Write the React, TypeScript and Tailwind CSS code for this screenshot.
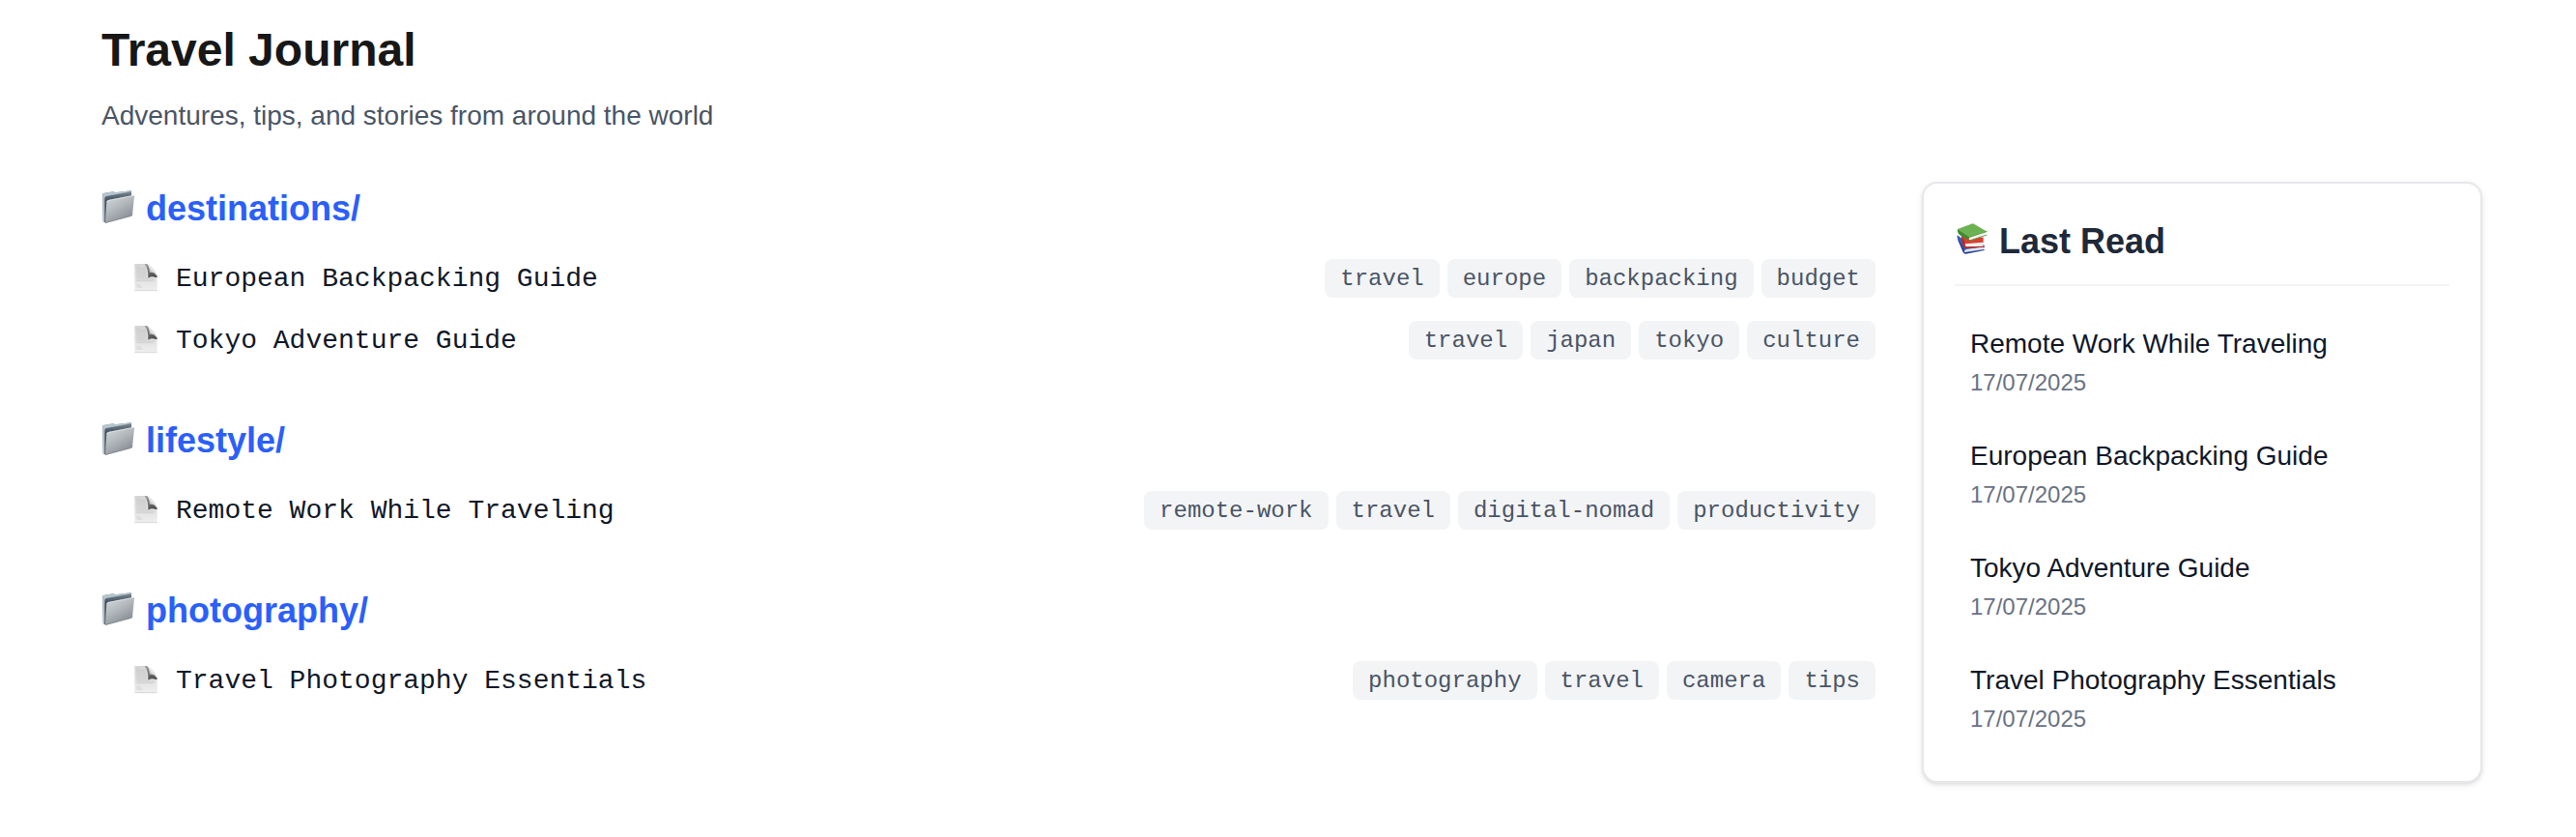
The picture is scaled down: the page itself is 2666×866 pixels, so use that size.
const FolderIcon = () => (
  <svg viewBox="45 48 108 108" className="h-9 w-9 shrink-0">
    <defs>
      <linearGradient id="folderFront" x1="0" y1="0" x2="0.6" y2="1">
        <stop offset="0" stopColor="#d9dcde" />
        <stop offset="0.5" stopColor="#b3b8bc" />
        <stop offset="1" stopColor="#858c92" />
      </linearGradient>
      <linearGradient id="folderBack" x1="0" y1="0" x2="0" y2="1">
        <stop offset="0" stopColor="#7d8b96" />
        <stop offset="0.3" stopColor="#43525e" />
        <stop offset="1" stopColor="#66737d" />
      </linearGradient>
    </defs>
    <path d="M49 62 Q49 60 51 60 L81 55 Q84 55 87 58 L136 52 Q138 52 138 54 V72 L60 152 L52 149 Q50 148 50 145Z" fill="url(#folderBack)" />
    <path d="M49 62 Q49 60 51 60 L81 55 Q84 55 87 58 L136 52 Q138 52 138 55 L60 69 Q55 70 55 75 L54 149 L52 148 Q50 147 50 145Z" fill="#b5c4cd" />
    <path d="M61 88 Q61 82 67 81 L143 66 Q148 65 147 70 L141 126 Q141 130 137 131 L60 152 Q57 153 57 149Z" fill="url(#folderFront)" />
    <path d="M62 88 Q62 83 67 82 L146 67" stroke="#eceef0" strokeWidth="2" fill="none" />
    <path d="M58 151 L137 130 Q141 129 141 125" stroke="#7b8389" strokeWidth="2" fill="none" />
  </svg>
);

const FileIcon = () => (
  <svg viewBox="141 276 84 84" className="h-7 w-7 shrink-0 overflow-visible">
    <defs>
      <linearGradient id="filePage" x1="0" y1="0" x2="0" y2="1">
        <stop offset="0" stopColor="#d6d6d6" />
        <stop offset="0.5" stopColor="#e0e0e0" />
        <stop offset="1" stopColor="#efefef" />
      </linearGradient>
      <linearGradient id="fileFold" x1="0.2" y1="0" x2="0.6" y2="1">
        <stop offset="0" stopColor="#9a9a9a" />
        <stop offset="0.5" stopColor="#6e6e6e" />
        <stop offset="1" stopColor="#4c4c4c" />
      </linearGradient>
      <linearGradient id="fileCurl" x1="1" y1="0" x2="0.3" y2="1">
        <stop offset="0" stopColor="#f4f4f4" />
        <stop offset="0.6" stopColor="#e2e2e2" />
        <stop offset="1" stopColor="#8e8e8e" />
      </linearGradient>
    </defs>
    <path d="M148 279 H184 L218 318 V363 H148Z" fill="url(#filePage)" />
    <path d="M148 362 H218" stroke="#cdcdcd" strokeWidth="2" />
    <path d="M154 287 H164 M154 292 H182 M154 297 H183 M154 302 H184 M154 307 H184 M154 312 H185 M154 317 H185 M154 322 H186 M154 327 H210 M154 332 H206 M154 345 H166 M154 351 H172" stroke="#bfbfbf" strokeWidth="1.6" />
    <path d="M179 279 Q186 278 190 282 L218 317 Q219 323 211 320 Q200 317 190 323 Q192 296 179 279Z" fill="url(#fileFold)" />
    <path d="M189 281 Q195 292 194 306 Q208 303 217 315 Q213 300 204 292 Q197 283 189 281Z" fill="url(#fileCurl)" />
  </svg>
);

const BooksIcon = () => (
  <svg viewBox="39 42 108 108" className="h-9 w-9 shrink-0">
    <path d="M46 88 Q46 85 49 86 L68 100 L131 116 V124 L72 132 L66 136Z" fill="#3c5bb4" />
    <path d="M73 129 L129 121 Q126 126 129 131 L76 140 Q70 135 73 129Z" fill="#dfe4f0" />
    <path d="M46 89 L66 126 Q68 131 70 138 L131 129 V132 L74 143 Q68 144 65 138 L49 101Z" fill="#27418f" />
    <path d="M60 83 L128 92 V108 L76 114 L64 112Z" fill="#d9402f" />
    <path d="M72 112 L127 107 Q124 113 128 120 L74 122 Q68 117 72 112Z" fill="#f1eeee" />
    <path d="M59 84 L71 106 Q67 115 75 121 L130 119 V122 L74 126 Q66 125 64 116Z" fill="#b52a1f" />
    <path d="M48 66 L91 50 Q95 48 99 50 L140 74 L84 93Z" fill="#6cb253" />
    <path d="M48 66 L84 91 Q79 98 85 104 L54 84 Q46 77 48 66Z" fill="#3f8a30" />
    <path d="M84 92 L135 75 Q131 80 134 86 L87 101 Q81 98 84 92Z" fill="#f3f5ee" />
    <path d="M84 102 L139 84" stroke="#4a9139" strokeWidth="2.5" />
    <path d="M83 91.5 L139 74" stroke="#4a9139" strokeWidth="2" />
  </svg>
);

const sections = [
  {
    name: "destinations/",
    posts: [
      { title: "European Backpacking Guide", tags: ["travel", "europe", "backpacking", "budget"] },
      { title: "Tokyo Adventure Guide", tags: ["travel", "japan", "tokyo", "culture"] },
    ],
  },
  {
    name: "lifestyle/",
    posts: [
      { title: "Remote Work While Traveling", tags: ["remote-work", "travel", "digital-nomad", "productivity"] },
    ],
  },
  {
    name: "photography/",
    posts: [
      { title: "Travel Photography Essentials", tags: ["photography", "travel", "camera", "tips"] },
    ],
  },
];

const lastRead = [
  { title: "Remote Work While Traveling", date: "17/07/2025" },
  { title: "European Backpacking Guide", date: "17/07/2025" },
  { title: "Tokyo Adventure Guide", date: "17/07/2025" },
  { title: "Travel Photography Essentials", date: "17/07/2025" },
];

export default function App() {
  return (
    <div className="min-h-screen bg-white pt-5 pr-[97px] pl-[105px] font-['Liberation_Sans',Arial,sans-serif] whitespace-nowrap">
      <header className="h-[168px]">
        <h1 className="text-[48px] leading-[64px] font-bold text-[#171717]">Travel Journal</h1>
        <p className="mt-4 text-[28px] leading-10 text-[#4a5565]">
          Adventures, tips, and stories from around the world
        </p>
      </header>
      <div className="flex items-start gap-12">
        <main className="flex flex-1 flex-col gap-11">
          {sections.map((section) => (
            <section key={section.name}>
              <h2 className="mb-3 flex h-14 items-center gap-[10px] text-[36px] leading-[56px] font-bold text-[#2b5ffb]">
                <span className="flex pb-1">
                  <FolderIcon />
                </span>
                {section.name}
              </h2>
              <ul>
                {section.posts.map((post) => (
                  <li key={post.title} className="flex h-16 items-center justify-between pl-8 font-['Liberation_Mono',monospace]">
                    <div className="flex items-center gap-4 text-[28px] leading-10 text-[#101828]">
                      <span className="flex pb-1">
                        <FileIcon />
                      </span>
                      <span className="pt-0.5 pl-px">{post.title}</span>
                    </div>
                    <div className="flex gap-2">
                      {post.tags.map((tag) => (
                        <span key={tag} className="rounded-lg bg-[#f3f4f6] px-4 pt-[5px] pb-[3px] text-2xl leading-8 text-[#4a5565]">
                          {tag}
                        </span>
                      ))}
                    </div>
                  </li>
                ))}
              </ul>
            </section>
          ))}
        </main>
        <aside className="w-[580px] rounded-2xl border-2 border-[#e5e7eb] bg-white p-8 shadow-[0_2px_6px_rgba(0,0,0,0.1),0_2px_4px_-2px_rgba(0,0,0,0.1)]">
          <h2 className="mb-6 flex items-center gap-[10px] border-b-2 border-[#f3f4f6] pb-4 text-[36px] leading-[56px] font-bold text-[#1e2939]">
            <span className="flex pb-1.5">
              <BooksIcon />
            </span>
            Last Read
          </h2>
          <ul className="flex flex-col gap-2">
            {lastRead.map((item) => (
              <li key={item.title} className="p-4">
                <div className="text-[28px] leading-10 text-[#101828]">{item.title}</div>
                <div className="mt-1 text-2xl leading-8 text-[#6a7282]">{item.date}</div>
              </li>
            ))}
          </ul>
        </aside>
      </div>
    </div>
  );
}
